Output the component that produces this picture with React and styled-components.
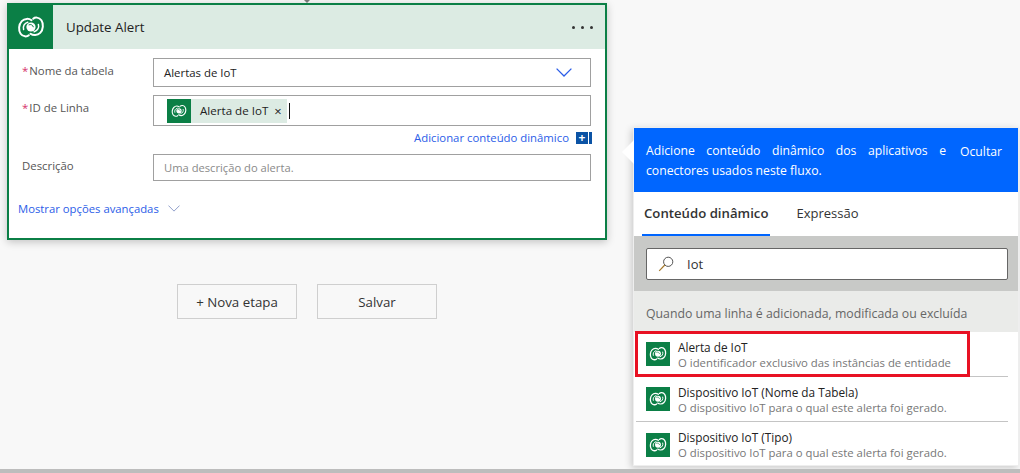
import React from "react";
import styled, { createGlobalStyle } from "styled-components";

const Global = createGlobalStyle`
  html, body { margin: 0; padding: 0; background: #f8f8f8; }
  body { width: 1020px; height: 473px; overflow: hidden; font-family: "Open Sans", "Noto Sans", "Liberation Sans", sans-serif; }
  #root { height: 473px; }
`;

const Page = styled.div`
  position: relative;
  width: 1020px;
  height: 473px;
  background: #f8f8f8;
  overflow: hidden;
  border-bottom: 4px solid #bdbdbd;
  box-sizing: border-box;
`;
const TopCaret = styled.div`
  position: absolute;
  left: 304px;
  top: 0;
  width: 0;
  height: 0;
  border-left: 3px solid transparent;
  border-right: 3px solid transparent;
  border-top: 3px solid #777;
`;
const Canvas = styled.div`
  display: flex;
  flex-direction: column;
  padding: 3px 0 0 7px;
  width: 600px;
`;
const Card = styled.section`
  box-sizing: border-box;
  width: 600px;
  height: 237px;
  border: 2px solid #0b7f46;
  background: #fff;
  box-shadow: 0 2px 8px rgba(0, 0, 0, 0.22);
`;
const CardHeader = styled.header`
  display: flex;
  align-items: center;
  height: 44px;
  background: #dcebe3;
`;
const HeaderIcon = styled.div`
  display: flex;
  align-items: center;
  justify-content: center;
  width: 45px;
  height: 44px;
  background: #0b7f46;
  margin-left: -1px;
`;
const CardTitle = styled.h2`
  flex: 1;
  margin: 0 0 0 13px;
  font-size: 13.3px;
  font-weight: 400;
  color: #222;
`;
const MoreDots = styled.div`
  display: flex;
  gap: 6px;
  margin-right: 12px;
  & > i { width: 3px; height: 3px; border-radius: 50%; background: #333; }
`;
const Form = styled.div`
  display: flex;
  flex-direction: column;
  padding: 9px 14px 0 13px;
`;
const Row = styled.div`
  display: flex;
  align-items: flex-start;
  margin-bottom: ${(p) => p.$gap || 0}px;
`;
const Label = styled.label`
  width: 131px;
  padding-top: ${(p) => p.$pad}px;
  font-size: 11.4px;
  line-height: 16px;
  color: #555;
  white-space: nowrap;
  & > b { color: #d6336c; font-weight: 400; margin-right: 1px; }
`;
const Field = styled.div`
  box-sizing: border-box;
  display: flex;
  align-items: center;
  width: 438px;
  height: ${(p) => p.$h}px;
  border: 1px solid #a0a0a0;
  background: #fff;
  padding: ${(p) => p.$tokens ? "0 0 0 13px" : "0 18px 0 10px"};
  font-size: ${(p) => p.$muted ? 11.2 : 11.4}px;
  color: ${(p) => p.$muted ? "#8a8a8a" : "#222"};
  justify-content: ${(p) => p.$between ? "space-between" : "flex-start"};
`;
const Token = styled.span`
  display: flex;
  align-items: center;
  height: 24px;
  background: #dcebe3;
  color: #222;
  font-size: 11.6px;
  margin-right: 2px;
`;
const TokenIcon = styled.span`
  display: flex;
  align-items: center;
  justify-content: center;
  width: 24px;
  height: 24px;
  background: #0b7f46;
  margin-right: 9px;
`;
const TokenX = styled.span`
  margin: 0 5px 0 6px;
  font-size: 13px;
`;
const Caret = styled.span`
  width: 1px;
  height: 16px;
  background: #111;
`;
const DynamicLink = styled.div`
  display: flex;
  justify-content: flex-end;
  align-items: center;
  height: 23px;
  margin-bottom: 5px;
  margin-right: -1px;
  font-size: 11.35px;
  color: #2b5de8;
`;
const PlusBox = styled.span`
  display: flex;
  margin-left: 7px;
  & > b {
    display: flex; align-items: center; justify-content: center;
    width: 12px; height: 12px; background: #0b53a5; color: #fff;
    font-size: 12px; line-height: 12px; font-weight: 700;
  }
  & > i { width: 3px; height: 12px; background: #0b53a5; margin-left: 1px; }
`;
const Advanced = styled.div`
  display: flex;
  align-items: center;
  gap: 9px;
  margin: 20px 0 0 -4px;
  font-size: 11.3px;
  color: #2b5de8;
`;
const Actions = styled.div`
  display: flex;
  gap: 20px;
  margin: 44px 0 0 170px;
`;
const ActionButton = styled.button`
  box-sizing: border-box;
  width: 120px;
  height: 35px;
  border: 1px solid #cfcfcf;
  background: #f8f8f8;
  color: #333;
  font-family: inherit;
  font-size: 13.3px;
  padding: 0;
`;
const Panel = styled.aside`
  position: absolute;
  left: 633px;
  top: 127px;
  width: 386px;
  height: 339px;
  box-sizing: border-box;
  border: 1px solid #eee;
  background: #fff;
  display: flex;
  flex-direction: column;
  box-shadow: -2px 2px 7px rgba(0, 0, 0, 0.18);
  &::before {
    content: "";
    position: absolute;
    left: -12px;
    top: 12px;
    width: 0;
    height: 0;
    border-top: 12px solid transparent;
    border-bottom: 12px solid transparent;
    border-right: 12px solid #fff;
  }
`;
const Banner = styled.div`
  display: flex;
  justify-content: space-between;
  height: 64px;
  box-sizing: border-box;
  flex: none;
  background: #0066ff;
  color: #fff;
  font-size: 12.2px;
  line-height: 20px;
  padding: 13px 16px 0 12px;
`;
const BannerText = styled.p`
  margin: 0;
  width: 300px;
  text-align: justify;
`;
const BannerAction = styled.span`
  margin-top: 1px;
`;
const Tabs = styled.div`
  display: flex;
  flex: none;
  height: 44px;
  padding-left: 8px;
  gap: 24px;
`;
const Tab = styled.div`
  display: flex;
  align-items: center;
  box-sizing: border-box;
  height: 44px;
  padding: 0 2px;
  font-size: ${(p) => p.$active ? 13.2 : 13}px;
  color: #333;
  font-weight: ${(p) => p.$active ? 600 : 400};
  border-bottom: 2px solid ${(p) => p.$active ? "#0066ff" : "transparent"};
`;
const SearchArea = styled.div`
  flex: none;
  height: 55px;
  box-sizing: border-box;
  background: #c8c9c7;
  padding: 12px 10px 0 12px;
`;
const SearchBox = styled.div`
  display: flex;
  align-items: center;
  box-sizing: border-box;
  height: 32px;
  background: #fff;
  border: 1px solid #666;
  border-radius: 2px;
  padding-left: 11px;
  gap: 13px;
  font-size: 13px;
  color: #333;
`;
const SectionHeading = styled.div`
  display: flex;
  align-items: center;
  flex: none;
  box-sizing: border-box;
  height: 41px;
  padding: 3px 0 0 12px;
  background: #eaebe9;
  color: #666;
  font-size: 12.3px;
`;
const Item = styled.div`
  position: relative;
  display: flex;
  align-items: center;
  flex: none;
  height: 45px;
  box-sizing: border-box;
  margin: 0 10px 0 2px;
  padding-left: 10px;
  gap: 8px;
  border-bottom: ${(p) => p.$last ? "none" : "1px solid #c4c4c4"};
  ${(p) => p.$highlight ? `&::after {
    content: "";
    position: absolute;
    left: -1px; top: -1px;
    width: 335px; height: 46px;
    box-sizing: border-box;
    border: 3px solid #e81123;
  }` : ""}
`;
const ItemIcon = styled.span`
  display: flex;
  align-items: center;
  justify-content: center;
  flex: none;
  width: 24px;
  height: 24px;
  background: #0b7f46;
`;
const ItemText = styled.div`
  display: flex;
  flex-direction: column;
  padding-top: 1px;
`;
const ItemTitle = styled.div`
  font-size: 11.8px;
  line-height: 16px;
  color: #222;
  font-weight: 500;
`;
const ItemDesc = styled.div`
  font-size: 11.35px;
  line-height: 16px;
  color: #777;
`;

const Logo = ({ size }) => (
  <svg width={size} height={size * 0.857} viewBox="0 0 28 24" fill="none" stroke="#fff" strokeLinecap="round">
    <path d="M14.5 5.2C12 3.4 7.6 3.2 4.8 6.1 1.6 9.4 1.3 15.4 3.6 18.8c2.4 3.4 6.6 3 8.2 1.4" strokeWidth="2" />
    <path d="M13.5 18.8c2.5 1.8 6.9 2 9.7-.9 3.2-3.3 3.5-9.3 1.2-12.7-2.4-3.4-6.6-3-8.2-1.4" strokeWidth="2" />
    <path d="M6.6 14.6c-1-3.2 1-6.6 4.2-7.4" strokeWidth="1.5" />
    <path d="M21.4 9.4c1 3.2-1 6.6-4.2 7.4" strokeWidth="1.5" />
    <circle cx="14" cy="12" r="4.6" fill="#fff" stroke="none" />
    <path d="M12 9.8c1.7-.9 3.9.1 4.3 2" stroke="#0b7f46" strokeWidth="1" />
  </svg>
);

const Chevron = ({ w, h, color, sw }) => (
  <svg width={w} height={h} viewBox="0 0 16 9" fill="none" stroke={color} strokeWidth={sw}>
    <path d="M.6.6 8 8 15.4.6" />
  </svg>
);

const Magnifier = () => (
  <svg width="16" height="16" viewBox="0 0 16 16" fill="none" stroke="#555" strokeWidth="1">
    <circle cx="10.2" cy="5.8" r="4.6" />
    <path d="M6.8 9 1.2 14.8" stroke="#a5792c" strokeWidth="1.2" />
  </svg>
);

const items = [
  ["Alerta de IoT", "O identificador exclusivo das instâncias de entidade", true],
  ["Dispositivo IoT (Nome da Tabela)", "O dispositivo IoT para o qual este alerta foi gerado.", false],
  ["Dispositivo IoT (Tipo)", "O dispositivo IoT para o qual este alerta foi gerado.", false],
];

export default function App() {
  return (
    <Page>
      <Global />
      <TopCaret />
      <Canvas>
        <Card>
          <CardHeader>
            <HeaderIcon><Logo size={28} /></HeaderIcon>
            <CardTitle>Update Alert</CardTitle>
            <MoreDots><i /><i /><i /></MoreDots>
          </CardHeader>
          <Form>
            <Row $gap={8}>
              <Label $pad={5}><b>*</b>Nome da tabela</Label>
              <Field $h={29} $between>Alertas de IoT<Chevron w={16} h={9} color="#2b5de8" sw={1.3} /></Field>
            </Row>
            <Row>
              <Label $pad={5}><b>*</b>ID de Linha</Label>
              <Field $h={31} $tokens>
                <Token>
                  <TokenIcon><Logo size={16} /></TokenIcon>
                  Alerta de IoT
                  <TokenX>×</TokenX>
                </Token>
                <Caret />
              </Field>
            </Row>
            <DynamicLink>
              Adicionar conteúdo dinâmico
              <PlusBox><b>+</b><i /></PlusBox>
            </DynamicLink>
            <Row>
              <Label $pad={4}>Descrição</Label>
              <Field $h={27} $muted>Uma descrição do alerta.</Field>
            </Row>
            <Advanced>
              Mostrar opções avançadas
              <Chevron w={12} h={7} color="#6b7fb8" sw={1} />
            </Advanced>
          </Form>
        </Card>
        <Actions>
          <ActionButton>+ Nova etapa</ActionButton>
          <ActionButton>Salvar</ActionButton>
        </Actions>
      </Canvas>
      <Panel>
        <Banner>
          <BannerText>Adicione conteúdo dinâmico dos aplicativos e conectores usados neste fluxo.</BannerText>
          <BannerAction>Ocultar</BannerAction>
        </Banner>
        <Tabs>
          <Tab $active>Conteúdo dinâmico</Tab>
          <Tab>Expressão</Tab>
        </Tabs>
        <SearchArea>
          <SearchBox><Magnifier />Iot</SearchBox>
        </SearchArea>
        <SectionHeading>Quando uma linha é adicionada, modificada ou excluída</SectionHeading>
        {items.map(([t, d, hi], i) => (
          <Item key={t} $highlight={hi} $last={i === 2}>
            <ItemIcon><Logo size={18} /></ItemIcon>
            <ItemText>
              <ItemTitle>{t}</ItemTitle>
              <ItemDesc>{d}</ItemDesc>
            </ItemText>
          </Item>
        ))}
      </Panel>
    </Page>
  );
}
